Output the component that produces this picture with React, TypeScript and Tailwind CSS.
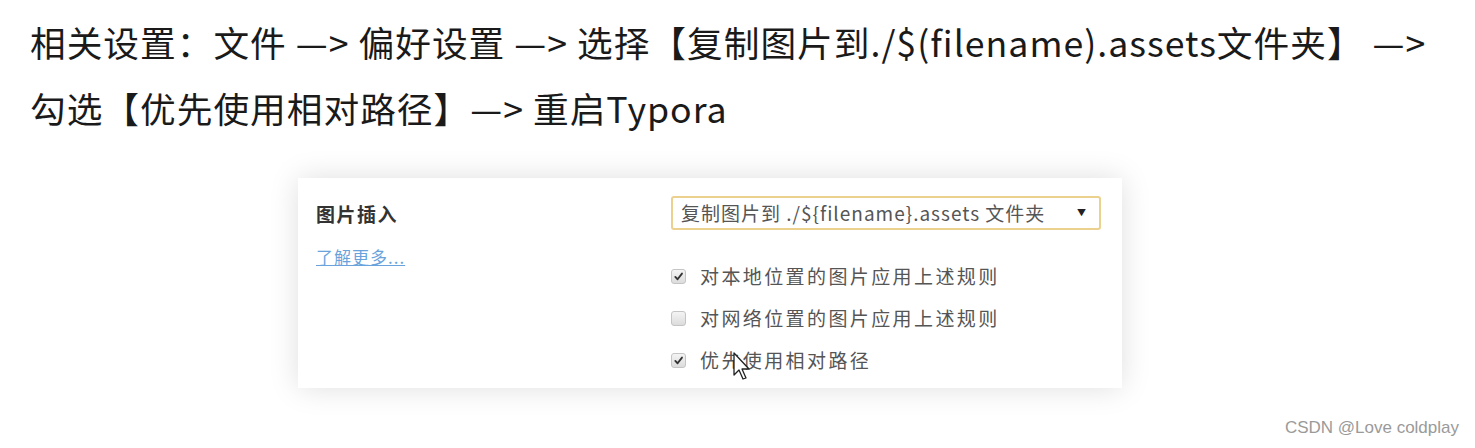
import React from "react";

const cjk = { fontFamily: '"Noto Sans CJK SC", "Noto Sans", sans-serif' };

function CheckBox({ checked }: { checked: boolean }) {
  return (
    <span className="flex h-[15px] w-[15px] items-center justify-center rounded-[3px] border border-[#c4c4c4] bg-gradient-to-b from-[#f4f4f4] to-[#dcdcdc]">
      {checked && (
        <svg viewBox="0 0 12 12" className="h-[11px] w-[11px]">
          <path d="M2.5 6.5 L5 9 L9.8 2.8" fill="none" stroke="#333" strokeWidth="2" strokeLinecap="round" strokeLinejoin="round" />
        </svg>
      )}
    </span>
  );
}

function Option({ checked, label }: { checked: boolean; label: string }) {
  return (
    <div className="flex h-[29px] items-center gap-[14px]">
      <CheckBox checked={checked} />
      <span className="text-[19px] tracking-[2.4px] text-[#555]">{label}</span>
    </div>
  );
}

export default function App() {
  return (
    <div className="relative h-[448px] w-[1475px] overflow-hidden bg-white" style={cjk}>
      <div className="pl-[30px] pt-[9px] text-[35.7px] leading-[66px] tracking-[1px] text-[#1a1a1a]">
        <div>相关设置：文件 —&gt; 偏好设置 —&gt; 选择【复制图片到./$(filename).assets文件夹】 —&gt;</div>
        <div>勾选【优先使用相对路径】—&gt; 重启Typora</div>
      </div>

      <div className="ml-[298px] mt-[37px] flex h-[210px] w-[824px] bg-white shadow-[0_0_28px_rgba(0,0,0,0.13)]">
        <div className="w-[373px] pl-[18px] pt-[22px]">
          <div className="text-[19px] font-bold tracking-[1.5px] text-[#333]">图片插入</div>
          <a href="#" className="mt-[15px] block text-[17px] tracking-[1px] text-[#6aa3dc] underline">
            了解更多...
          </a>
        </div>
        <div className="flex flex-col pt-[18px]">
          <div className="flex h-[34px] w-[430px] items-center justify-between rounded-[3px] border-2 border-[#ecd08e] pl-[8px] pr-[13px]">
            <span className="text-[19px] tracking-[1px] text-[#555]">复制图片到 ./${"{filename}"}.assets 文件夹</span>
            <span className="text-[9px] text-[#222]">▼</span>
          </div>
          <div className="mt-[32px] flex flex-col gap-[13px]">
            <Option checked label="对本地位置的图片应用上述规则" />
            <Option checked={false} label="对网络位置的图片应用上述规则" />
            <Option checked label="优先使用相对路径" />
          </div>
        </div>
      </div>

      <svg className="absolute left-[733px] top-[352px]" width="20" height="30" viewBox="0 0 20 30">
        <path d="M1 1 L1 23 L6 18 L10 27 L13 26 L9 17 L16 17 Z" fill="white" stroke="#222" strokeWidth="1.3" strokeLinejoin="round" />
      </svg>

      <div
        className="absolute right-[16px] bottom-[8px] text-[17px] text-[#9a9a9a]"
        style={{ fontFamily: '"Liberation Sans", Arial, sans-serif' }}
      >
        CSDN @Love coldplay
      </div>
    </div>
  );
}
